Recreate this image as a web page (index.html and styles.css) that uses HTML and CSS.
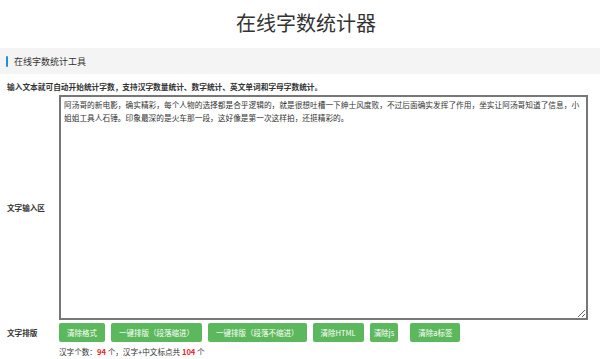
FILE: index.html
```html
<!DOCTYPE html>
<html lang="zh-CN">
<head>
  <meta charset="UTF-8">
  <title>在线字数统计器</title>
  <link rel="stylesheet" href="styles.css">
</head>
<body>

  <h1 class="title">在线字数统计器</h1>

  <div class="section-head"><span class="mark"></span>在线字数统计工具</div>

  <p class="desc">输入文本就可自动开始统计字数，支持汉字数量统计、数字统计、英文单词和字母字数统计。</p>

  <div class="row">
    <label class="row-label" for="content">文字输入区</label>
    <textarea id="content" class="text-input">阿汤哥的新电影，确实精彩，每个人物的选择都是合乎逻辑的，就是很想吐槽一下绅士风度败，不过后面确实发挥了作用，坐实让阿汤哥知道了信息，小姐姐工具人石锤。印象最深的是火车那一段，这好像是第一次这样拍，还挺精彩的。</textarea>
  </div>

  <div class="row tools">
    <span class="row-label">文字排版</span>
    <div class="btns">
      <button class="btn">清除格式</button>
      <button class="btn">一键排版（段落缩进）</button>
      <button class="btn">一键排版（段落不缩进）</button>
      <button class="btn">清除HTML</button>
      <button class="btn btn-js">清除js</button>
      <button class="btn btn-last">清除a标签</button>
    </div>
  </div>

  <p class="stats">汉字个数：<b>94</b> 个，汉字+中文标点共 <b>104</b> 个</p>

</body>
</html>
```

FILE: styles.css
```css
body {
  margin: 0;
  background: #fff;
  color: #333;
  font-family: "Noto Sans CJK SC", "Noto Sans", sans-serif;
}
.title {
  margin: 0;
  height: 48px;
  line-height: 45px;
  padding-left: 12px;
  text-align: center;
  font-size: 20px;
  font-weight: normal;
  color: #333;
}
.section-head {
  display: flex;
  align-items: center;
  height: 26px;
  padding-left: 6px;
  background: #f4f4f4;
  font-size: 9px;
  color: #333;
}
.mark {
  width: 2px;
  height: 11px;
  margin-right: 6px;
  border-radius: 1px;
  background: #1e8fe0;
}
.desc {
  margin: 7px 0 0 7px;
  font-size: 7.7px;
  font-weight: bold;
  line-height: 12px;
}
.row {
  display: flex;
  align-items: center;
  margin-top: 2px;
}
.row-label {
  width: 52px;
  padding-left: 7px;
  flex-shrink: 0;
  font-size: 7.6px;
  font-weight: bold;
}
.text-input {
  width: 529px;
  height: 225px;
  box-sizing: border-box;
  margin: 0;
  padding: 2px 3px;
  border: 2px solid #777;
  font-family: "Noto Sans CJK SC", sans-serif;
  font-size: 7.7px;
  line-height: 12.5px;
  color: #333;
  resize: vertical;
}
.tools {
  margin-top: 3px;
}
.btns {
  display: flex;
  gap: 6px;
}
.btn {
  height: 19px;
  padding: 0 8px;
  border: none;
  border-radius: 2px;
  background: #5cb85c;
  color: #fff;
  font-family: "Noto Sans CJK SC", sans-serif;
  font-size: 7.5px;
  cursor: pointer;
}
.btn-js {
  padding: 0 4px;
}
.btn-last {
  margin-left: 6px;
}
.stats {
  margin: 4px 0 0 59px;
  font-size: 7.6px;
  line-height: 12px;
}
.stats b {
  color: #e8212b;
}
```
